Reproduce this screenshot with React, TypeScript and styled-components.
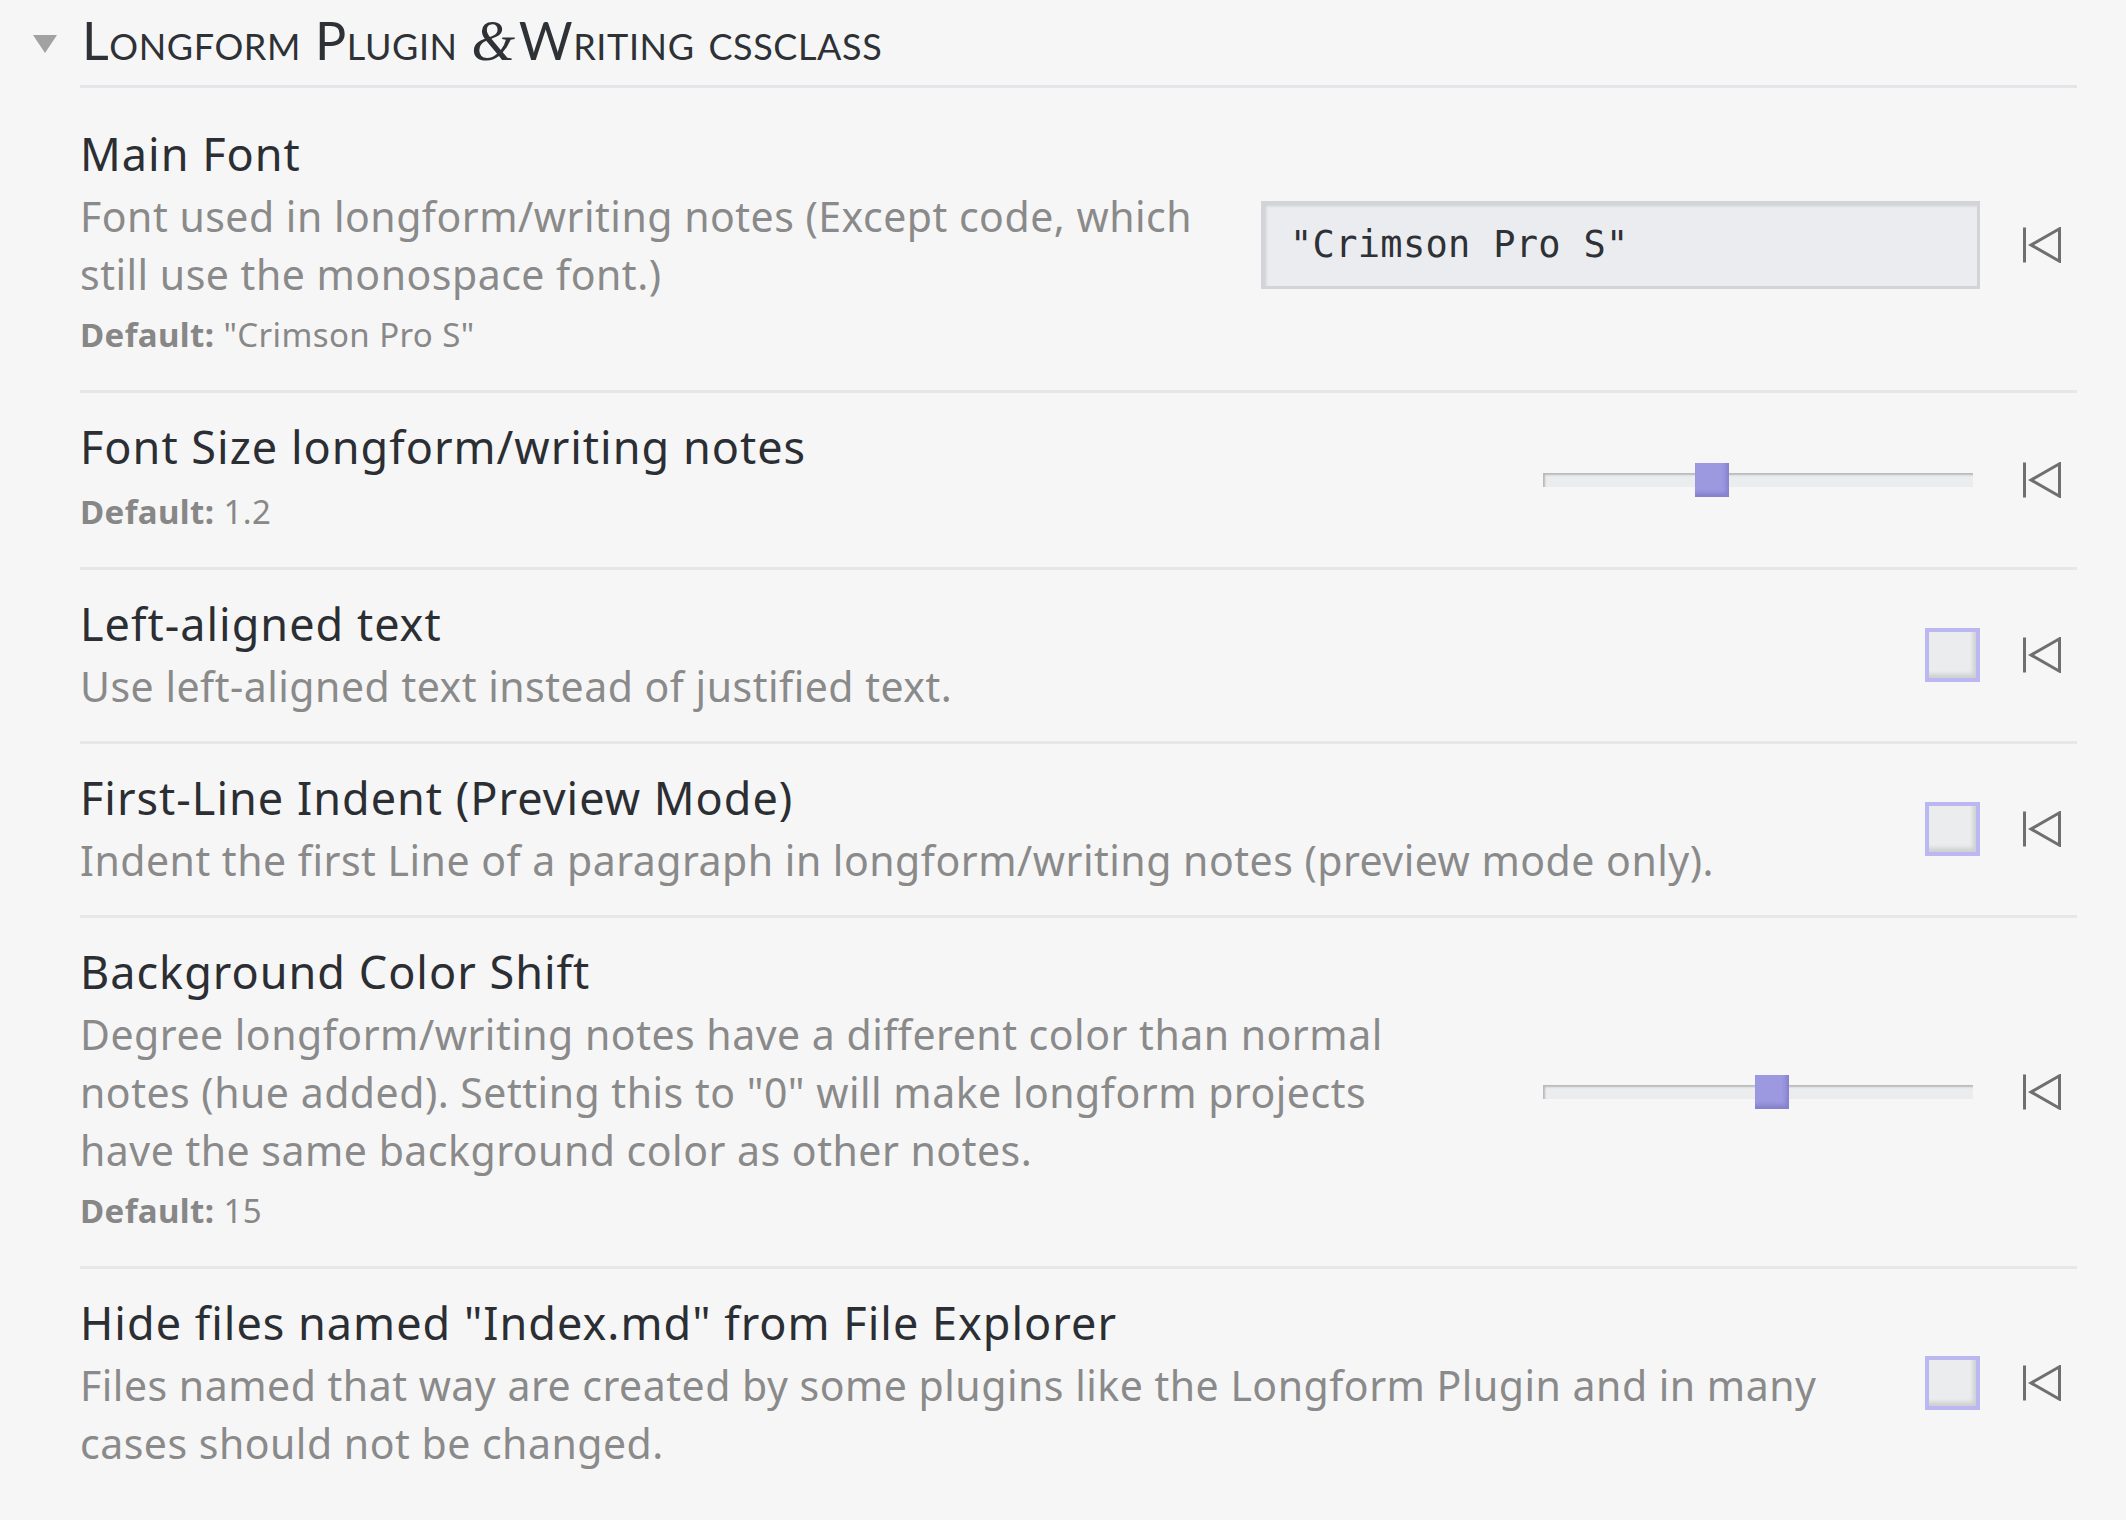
import React from "react";
import styled, { createGlobalStyle } from "styled-components";

const GlobalStyle = createGlobalStyle`
  html, body {
    margin: 0;
    padding: 0;
    background: #f6f6f6;
  }
  body {
    font-family: "Noto Sans", Roboto, sans-serif;
    -webkit-font-smoothing: antialiased;
  }
`;

const Page = styled.div`
  width: 2126px;
  min-height: 1520px;
  box-sizing: border-box;
  padding-right: 49px;
  background: #f6f6f6;
`;

const HeadingRow = styled.div`
  display: flex;
  align-items: stretch;
`;

const Gutter = styled.div`
  width: 80px;
  flex: 0 0 80px;
  box-sizing: border-box;
  padding-left: 33px;
  padding-top: 35px;
`;

const Triangle = styled.div`
  width: 0;
  height: 0;
  border-left: 12px solid transparent;
  border-right: 12px solid transparent;
  border-top: 18px solid #a2a2a2;
`;

const HeadingTitle = styled.h2`
  flex: 1;
  margin: 0;
  padding: 5px 0 9px 2px;
  border-bottom: 3px solid #e4e5e8;
  font-family: Lato, "Noto Sans", sans-serif;
  font-weight: 400;
  font-size: 52px;
  line-height: 70px;
  font-variant: small-caps;
  color: #2e3135;
  letter-spacing: 0.6px;
`;

const Amp = styled.span`
  font-family: "Liberation Serif", "DejaVu Serif", serif;
  font-style: italic;
  font-variant: normal;
  font-size: 56px;
  margin-right: 3px;
`;

const SettingsList = styled.div`
  margin-left: 80px;
  margin-top: 12px;
`;

const Row = styled.div<{ $first?: boolean }>`
  display: flex;
  align-items: center;
  gap: 40px;
  padding: 25px 0 26px;
  border-top: ${(p) => (p.$first ? "none" : "3px solid #e6e7e9")};
`;

const Info = styled.div<{ $maxWidth?: number }>`
  flex: 1 1 auto;
  min-width: 0;
  max-width: ${(p) => (p.$maxWidth ? `${p.$maxWidth}px` : "none")};
`;

const Name = styled.div`
  font-size: 45px;
  line-height: 58px;
  color: #2b2e33;
  letter-spacing: 1px;
`;

const Description = styled.div`
  padding-top: 4px;
  font-size: 41px;
  line-height: 58px;
  color: #8a8a8a;
  letter-spacing: 0.5px;
`;

const DefaultLine = styled.div`
  padding-top: 3px;
  font-size: 33px;
  line-height: 58px;
  color: #888888;
  letter-spacing: 0.4px;
`;

const DefaultLabel = styled.b`
  font-weight: 700;
  color: #878787;
`;

const Controls = styled.div`
  flex: 0 0 auto;
  margin-left: auto;
  display: flex;
  align-items: center;
`;

const TextInput = styled.input`
  width: 719px;
  height: 88px;
  box-sizing: border-box;
  margin: 0;
  padding: 0 0 0 26px;
  border: 3px solid #d3d4d8;
  border-radius: 0;
  background: #ebecef;
  box-shadow: inset 2px 2px 3px rgba(0, 0, 0, 0.12);
  font-family: "DejaVu Sans Mono", "Liberation Mono", monospace;
  font-size: 37px;
  letter-spacing: 0.3px;
  color: #2e3135;
  outline: none;
`;

const RangeInput = styled.input`
  -webkit-appearance: none;
  appearance: none;
  width: 430px;
  height: 34px;
  margin: 0 7px 0 0;
  padding: 0;
  background: transparent;
  outline: none;

  &::-webkit-slider-runnable-track {
    height: 14px;
    background: #ebecee;
    box-shadow: inset 3px 3px 2px -1px rgba(0, 0, 0, 0.22);
  }

  &::-webkit-slider-thumb {
    -webkit-appearance: none;
    appearance: none;
    width: 34px;
    height: 34px;
    margin-top: -10px;
    border: none;
    border-radius: 0;
    background: #9d99e1;
    box-shadow: inset -3px -4px 4px rgba(50, 40, 130, 0.22);
  }
`;

const Checkbox = styled.input`
  -webkit-appearance: none;
  appearance: none;
  width: 55px;
  height: 54px;
  box-sizing: border-box;
  margin: 0;
  border: 4px solid #bbb7f0;
  border-radius: 0;
  background: #ebecee;
  box-shadow: inset -3px -4px 4px rgba(0, 0, 0, 0.12);
`;

const ResetButton = styled.button`
  display: flex;
  align-items: center;
  justify-content: center;
  width: 38px;
  height: 36px;
  padding: 0;
  margin: 0 16px 0 43px;
  border: none;
  background: transparent;
  color: #6f6f6f;
  cursor: pointer;
`;

const ResetIcon = () => (
  <svg width="38" height="36" viewBox="0 0 38 36" fill="none">
    <line x1="1.5" y1="0.5" x2="1.5" y2="35.5" stroke="currentColor" strokeWidth="3" />
    <polygon
      points="8,18 36.5,1.8 36.5,34.2"
      stroke="currentColor"
      strokeWidth="3"
      strokeLinejoin="miter"
      fill="none"
    />
  </svg>
);

type Setting = {
  name: string;
  desc?: string;
  def?: string;
  control: React.ReactNode;
  maxWidth?: number;
};

const settings: Setting[] = [
  {
    name: "Main Font",
    desc: "Font used in longform/writing notes (Except code, which still use the monospace font.)",
    def: '"Crimson Pro S"',
    control: <TextInput type="text" defaultValue={'"Crimson Pro S"'} />,
  },
  {
    name: "Font Size longform/writing notes",
    def: "1.2",
    control: <RangeInput type="range" min={0.7} max={2} step={0.05} defaultValue={1.2} />,
  },
  {
    name: "Left-aligned text",
    desc: "Use left-aligned text instead of justified text.",
    control: <Checkbox type="checkbox" />,
  },
  {
    name: "First-Line Indent (Preview Mode)",
    desc: "Indent the first Line of a paragraph in longform/writing notes (preview mode only).",
    control: <Checkbox type="checkbox" />,
  },
  {
    name: "Background Color Shift",
    desc: 'Degree longform/writing notes have a different color than normal notes (hue added). Setting this to "0" will make longform projects have the same background color as other notes.',
    def: "15",
    control: <RangeInput type="range" min={0} max={28} step={1} defaultValue={15} />,
    maxWidth: 1350,
  },
  {
    name: 'Hide files named "Index.md" from File Explorer',
    desc: "Files named that way are created by some plugins like the Longform Plugin and in many cases should not be changed.",
    control: <Checkbox type="checkbox" />,
  },
];

export default function App() {
  return (
    <>
      <GlobalStyle />
      <Page>
        <HeadingRow>
          <Gutter>
            <Triangle />
          </Gutter>
          <HeadingTitle>
            Longform Plugin <Amp>&amp;</Amp>Writing cssclass
          </HeadingTitle>
        </HeadingRow>
        <SettingsList>
          {settings.map((s, i) => (
            <Row key={s.name} $first={i === 0}>
              <Info $maxWidth={s.maxWidth}>
                <Name>{s.name}</Name>
                {(s.desc || s.def) && (
                  <Description>
                    {s.desc}
                    {s.def && (
                      <DefaultLine>
                        <DefaultLabel>Default:</DefaultLabel> {s.def}
                      </DefaultLine>
                    )}
                  </Description>
                )}
              </Info>
              <Controls>
                {s.control}
                <ResetButton aria-label="Restore default">
                  <ResetIcon />
                </ResetButton>
              </Controls>
            </Row>
          ))}
        </SettingsList>
      </Page>
    </>
  );
}
